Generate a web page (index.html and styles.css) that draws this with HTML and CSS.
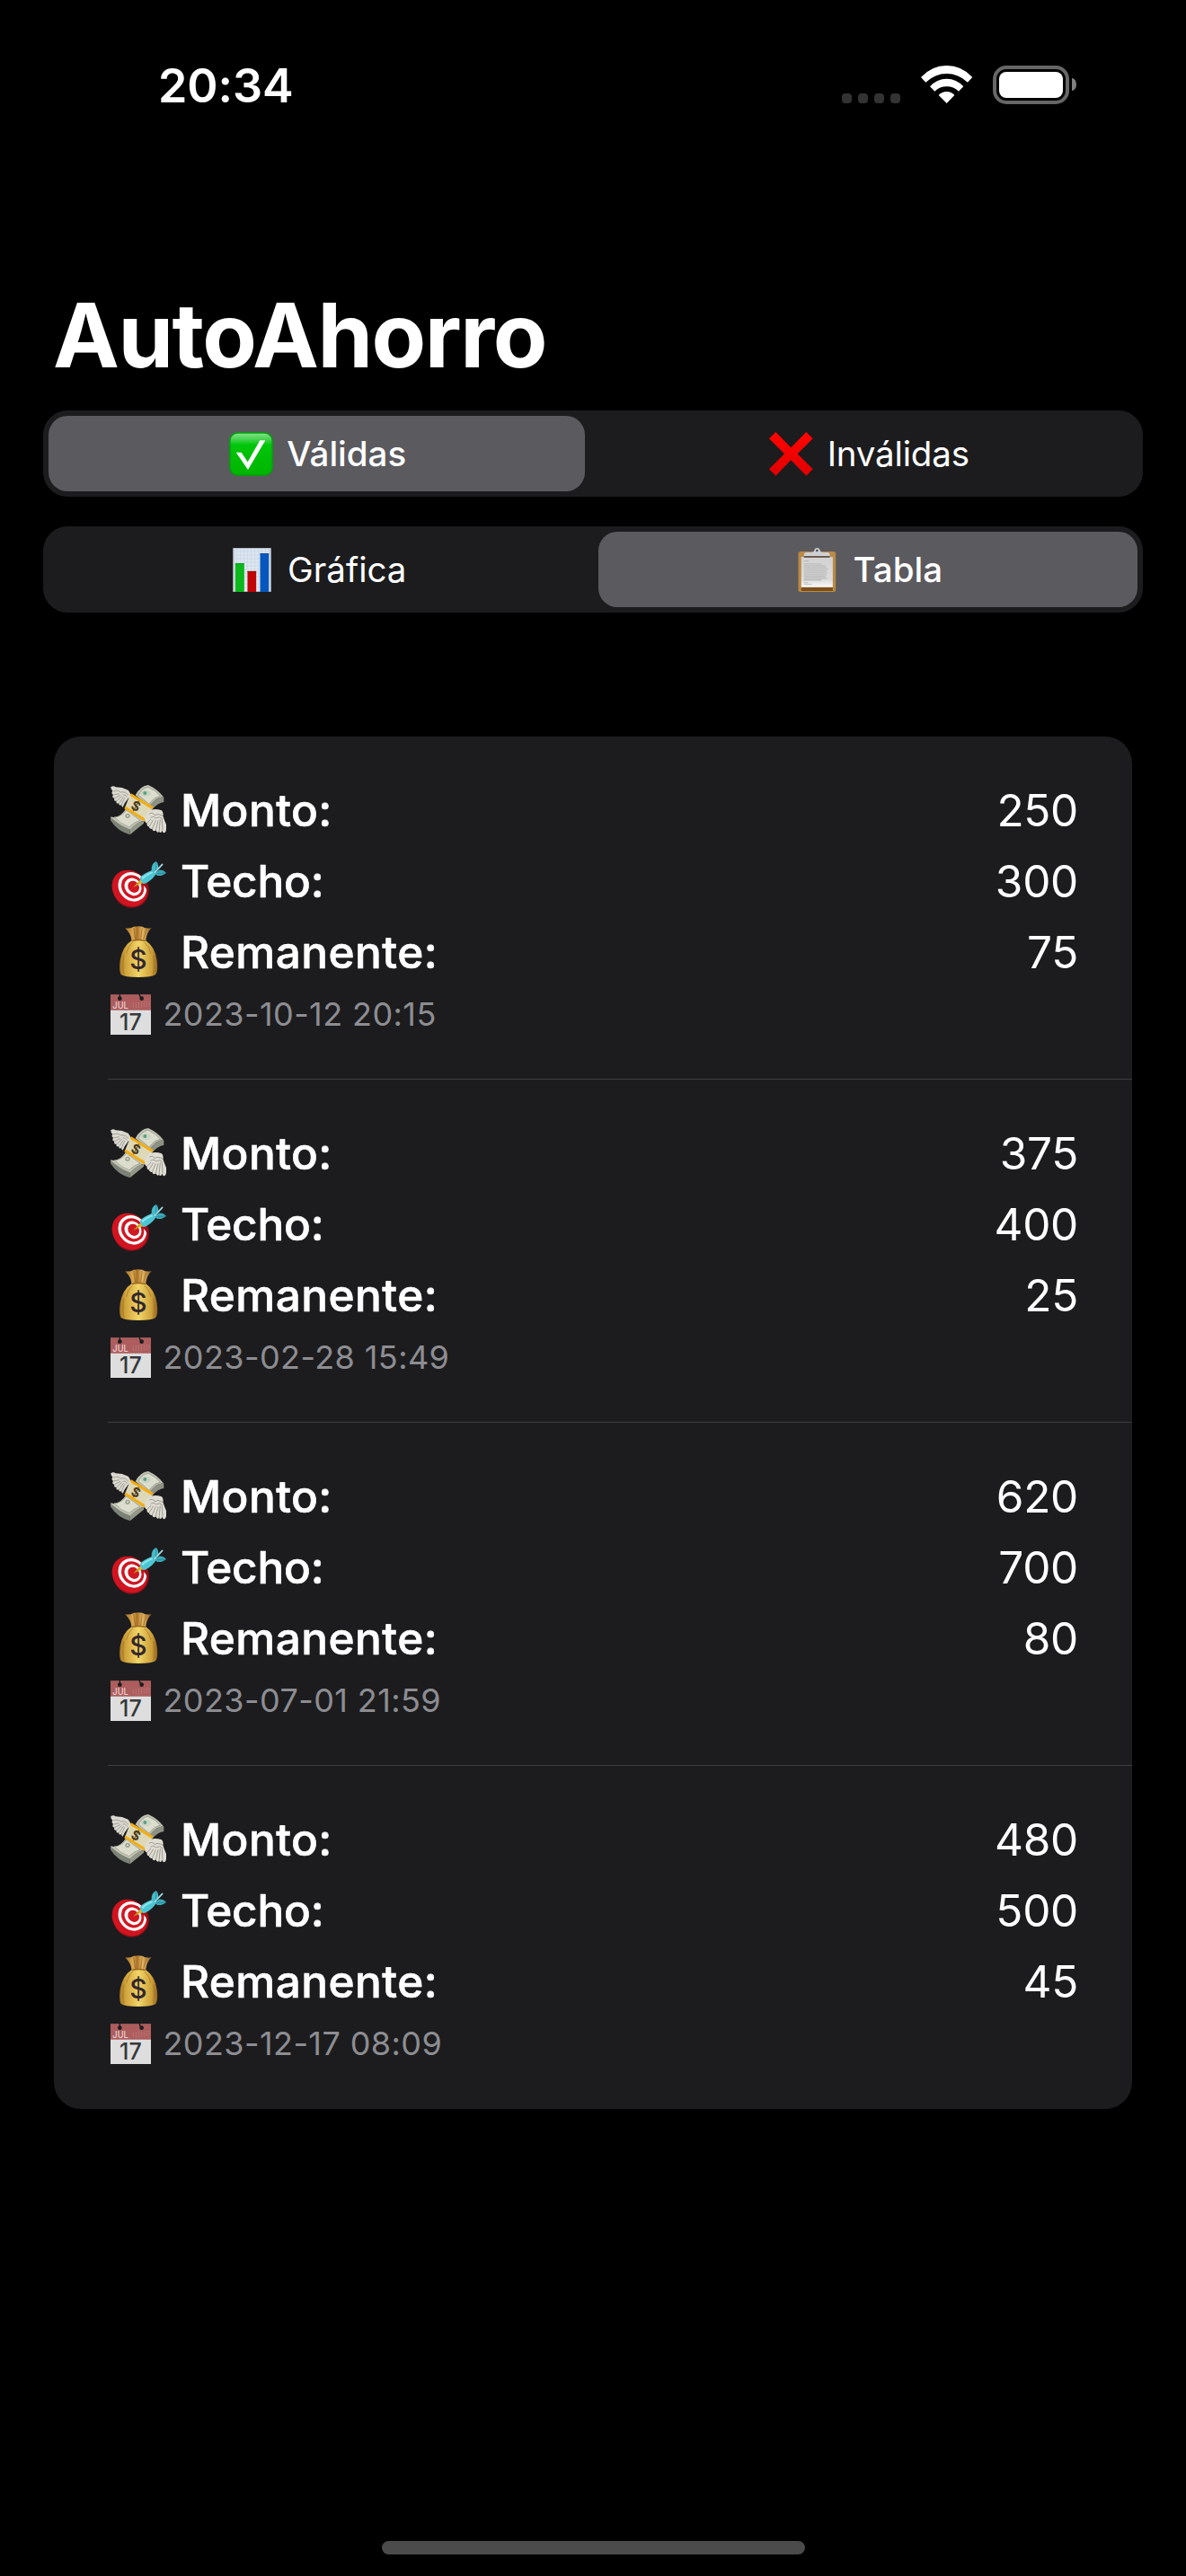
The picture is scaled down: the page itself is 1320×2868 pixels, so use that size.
FILE: index.html
```html
<!DOCTYPE html>
<html lang="es">
<head>
<meta charset="utf-8">
<title>AutoAhorro</title>
<link rel="stylesheet" href="styles.css">
</head>
<body>
<svg class="gradients" aria-hidden="true">
  <defs>
    <linearGradient id="green" x1="0" y1="0" x2="0" y2="1"><stop offset="0" stop-color="#7fe085"/><stop offset=".12" stop-color="#4fd457"/><stop offset=".28" stop-color="#00c60a"/><stop offset="1" stop-color="#00b400"/></linearGradient>
    <linearGradient id="red" x1="0" y1="0" x2="0" y2="1"><stop offset="0" stop-color="#ff0500"/><stop offset="1" stop-color="#e00000"/></linearGradient>
    <linearGradient id="paper" x1="0" y1="0" x2="0" y2="1"><stop offset="0" stop-color="#d2d2d2"/><stop offset=".75" stop-color="#dcdcdc"/><stop offset="1" stop-color="#fafafa"/></linearGradient>
    <linearGradient id="sack" x1="0" y1="0" x2="1" y2="0"><stop offset="0" stop-color="#a87a26"/><stop offset=".15" stop-color="#cfa23a"/><stop offset=".5" stop-color="#f2d568"/><stop offset=".85" stop-color="#cda03a"/><stop offset="1" stop-color="#916320"/></linearGradient>
    <linearGradient id="neck" x1="0" y1="0" x2="1" y2="0"><stop offset="0" stop-color="#a8752e"/><stop offset=".3" stop-color="#dba84e"/><stop offset=".45" stop-color="#a87028"/><stop offset=".65" stop-color="#e5b762"/><stop offset="1" stop-color="#8e5f25"/></linearGradient>
    <linearGradient id="grid" x1="0" y1="0" x2="0" y2="1"><stop offset="0" stop-color="#d9e4ef"/><stop offset="1" stop-color="#e8ecf0"/></linearGradient>
  </defs>
</svg>

<svg class="sprite" aria-hidden="true">
  <symbol id="money" viewBox="39 33 186 186">
    <path d="M40 148Q60 156 82 133L94 117L152 160Q125 168 106 192Q72 190 40 160Z" fill="#c3c5b4"/>
    <path d="M40 150Q70 178 104 190L104 208Q62 196 41 163Z" fill="#7d8277"/>
    <path d="M104 190Q122 168 150 161L150 170Q130 186 104 208Z" fill="#939888"/>
    <path d="M52 149Q70 151 93 126L138 160Q118 166 101 182Q74 174 52 149Z" fill="#dcddcd" stroke="#8c8f86" stroke-width="2"/>
    <path d="M122 76Q138 45 165 42Q196 56 217 83Q194 79 170 113Z" fill="#bfc2b2"/>
    <path d="M217 83V99Q198 101 180 122L168 112Q193 80 217 83Z" fill="#8d9184"/>
    <path d="M132 75Q146 51 165 49Q190 60 206 79Q184 82 168 106Z" fill="#dbddcd" stroke="#898d82" stroke-width="2"/>
    <ellipse cx="157" cy="70" rx="17" ry="11" fill="#ccd3c2"/><circle cx="154" cy="69" r="6" fill="#58a184"/>
    <circle cx="96" cy="145" r="8" fill="#9ca291"/><circle cx="96" cy="145" r="3" fill="#e2e4d4"/>
    <path d="M105 73L180 120L153 164L86 120Z" fill="#ddd8b7"/>
    <path d="M108 70L182 115L177 123L103 77Z" fill="#f3ad13"/>
    <path d="M90 113L156 155L151 163L85 121Z" fill="#f3ad13"/>
    <text x="124" y="128" class="glyph band" transform="rotate(28 124 113)">$</text>
    <path d="M40 49Q48 43 56 49Q78 49 98 59Q108 70 105 83Q96 85 93 94Q86 101 80 116Q74 113 76 108Q66 113 67 103Q56 106 59 95Q49 97 52 86Q42 84 48 74Q40 69 46 62Q39 56 40 49Z" fill="#dbd9cf"/>
    <path d="M48 63Q66 57 75 68M49 75L68 71M53 86L72 76M60 95L77 79M68 103L82 82M76 108L86 85M75 65Q90 63 99 76M80 75Q91 73 94 83" fill="none" stroke="#99978e" stroke-width="2.5"/>
    <path d="M157 143Q158 130 173 126Q188 119 210 127Q217 135 214 145Q218 158 225 174Q227 201 219 202Q214 202 211 194Q208 205 201 198Q195 204 190 193Q182 200 178 189Q169 191 167 181Q159 180 161 170Q151 166 155 157Q150 151 157 143Z" fill="#dfddd2"/>
    <path d="M161 170L174 156M168 181L182 158M178 189L190 160M190 193L198 160M201 198L205 157M213 194L211 157M168 139Q180 131 186 143Q197 135 214 145M173 151Q185 144 190 153Q204 145 213 155" fill="none" stroke="#929087" stroke-width="2.5"/>
  </symbol>

  <symbol id="target" viewBox="39 30 186 186">
    <ellipse cx="108" cy="152" rx="59" ry="61" transform="rotate(-35 108 152)" fill="#8d1018"/>
    <ellipse cx="103" cy="147" rx="56" ry="64" transform="rotate(-38 103 147)" fill="#d11420"/>
    <ellipse cx="112" cy="142" rx="45" ry="51" transform="rotate(-38 112 142)" fill="#fff"/>
    <ellipse cx="113" cy="142" rx="36" ry="41" transform="rotate(-38 113 142)" fill="#d11722"/>
    <ellipse cx="114" cy="142" rx="27" ry="31" transform="rotate(-38 114 142)" fill="#fff"/>
    <ellipse cx="116" cy="142" rx="18" ry="21" transform="rotate(-38 116 142)" fill="#d11722"/>
    <path d="M142 132L160 128Q166 140 161 156Q158 143 142 132Z" fill="#9c1119"/>
    <path d="M115 143L134 123L142 116L149 129L137 133Z" fill="#e4b91f"/>
    <path d="M115 143L136 126" stroke="#8d6810" stroke-width="2"/>
    <path d="M137 112Q144 100 177 87L191 99Q178 121 154 131Q141 134 137 112Z" fill="#4cc6d4"/>
    <path d="M142 111Q156 99 178 91L181 96Q158 104 147 118Z" fill="#8de3e8"/>
    <path d="M176 90Q173 66 191 57Q198 61 199 79L190 98Z" fill="#46bac8"/>
    <path d="M187 98L200 86Q215 84 225 96Q213 107 195 105Z" fill="#3ba9b8"/>
    <path d="M187 94L212 67" stroke="#a1dce2" stroke-width="5" stroke-linecap="round"/>
    <path d="M191 88L191 59M196 98L222 96" stroke="#217c8c" stroke-width="2"/>
  </symbol>

  <symbol id="bag" viewBox="39 267 186 186">
    <path d="M88 280Q103 283 117 275Q132 272 145 275Q160 284 176 279Q160 295 157 319L158 326H108L109 319Q108 301 88 280Z" fill="url(#neck)"/>
    <path d="M116 279L122 317M145 278L140 317M158 284L149 317" stroke="#8b5a20" stroke-width="3" opacity=".6"/>
    <path d="M109 322Q132 315 157 322Q187 342 194 387Q199 422 190 435Q178 444 132 444Q86 444 74 435Q67 423 71 387Q80 340 109 322Z" fill="url(#sack)"/>
    <path d="M110 323Q132 316 156 323" fill="none" stroke="#98671f" stroke-width="4"/>
    <path d="M84 370Q78 410 84 434M182 370Q188 410 181 434M113 328Q98 340 92 365M153 328Q169 342 174 365" fill="none" stroke="#9f7025" stroke-width="3" opacity=".65"/>
    <text x="132" y="418" class="glyph dollar">$</text>
  </symbol>

  <symbol id="calendar" viewBox="39 51 135 135">
    <path d="M39 51H174V186H39Z" fill="#dedede"/>
    <path d="M39 51H174V104H39Z" fill="#ad5d5d"/>
    <path d="M39 52H174" stroke="#8f5353" stroke-width="3"/>
    <path d="M70 51V63M136 51Q136 60 143 63" stroke="#1c1c1e" stroke-width="4" fill="none"/>
    <circle cx="70" cy="65" r="7" fill="#1c1c1e"/><circle cx="143" cy="65" r="7" fill="#1c1c1e"/>
    <path d="M115 80V97M124 79V97M133 78V97M142 77V97M151 76V95M160 75V93M168 75V91" stroke="#cf9292" stroke-width="2" stroke-dasharray="3 2"/>
    <text x="46" y="98" class="glyph month" textLength="52" lengthAdjust="spacingAndGlyphs">JUL</text>
    <text x="106" y="171" class="glyph day" textLength="74" lengthAdjust="spacingAndGlyphs">17</text>
  </symbol>

  <symbol id="check" viewBox="45 33 147 147">
    <rect x="45" y="33" width="147" height="147" rx="29" fill="#0a9a12"/>
    <rect x="50" y="38" width="137" height="137" rx="24" fill="url(#green)"/>
    <path d="M68 101H86L107 133L148 61H166L108 159Z" fill="#fff"/>
  </symbol>

  <symbol id="chart" viewBox="59 420 126 147">
    <path d="M59 420H185V567H59Z" fill="url(#grid)"/>
    <path d="M71 420V567M83 420V567M95 420V567M107 420V567M119 420V567M131 420V567M143 420V567M155 420V567M167 420V567M179 420V567M59 432H185M59 444H185M59 456H185M59 468H185M59 480H185M59 492H185M59 504H185M59 516H185M59 528H185M59 540H185M59 552H185" stroke="#c6d7e6" stroke-width="2"/>
    <path d="M60.500 421.500H183.500V565.500H60.500Z" fill="none" stroke="#b4bcc6" stroke-width="3"/>
    <path d="M66 472H96V567H66Z" fill="#0cb81c"/><path d="M107 498H136V567H107Z" fill="#bf0606"/><path d="M149 439H178V567H149Z" fill="#0657bd"/>
    <path d="M66 473H96" stroke="#08951a" stroke-width="3"/><path d="M107 499H136" stroke="#930909" stroke-width="3"/><path d="M149 440H178" stroke="#0a469b" stroke-width="3"/>
  </symbol>

  <symbol id="cross" viewBox="19 33 147 147">
    <path d="M41 33L92 85L143 33L165 55L114 106L165 157L143 179L92 127L41 179L19 157L70 106L19 55Z" fill="url(#red)"/>
  </symbol>

  <symbol id="clipboard" viewBox="119 419 127 148">
    <rect x="119" y="431" width="126" height="136" rx="8" fill="#b98a45"/>
    <path d="M129 551H235V564H129Z" fill="#7c4f1d"/>
    <path d="M129 449H235V551H129Z" fill="url(#paper)"/>
    <path d="M160 436Q173 432 173 427H192Q192 432 205 436Z" fill="#94b5d9"/>
    <path d="M138 450V442Q138 434 148 434H167Q173 430 173 428Q174 419 182 419Q191 419 192 428Q192 431 198 434H216Q225 434 225 442V450Z" fill="#cdd0d3"/>
    <path d="M138 449H225" stroke="#5b4637" stroke-width="5"/>
    <circle cx="182" cy="428" r="4" fill="#4a4d52"/>
    <path d="M138 463H154M138 536H152M138 541H164" stroke="#aaa" stroke-width="2"/>
    <path d="M138 473H197M138 479H211M138 485H215M138 491H220M138 497H214M138 503H216M138 509H214M138 515H211M138 521H215M138 527H197" fill="none" stroke="#bdbdbd" stroke-width="4"/>
  </symbol>
</svg>

<div class="screen">
  <header class="status">
    <span class="clock">20:34</span>
    <div class="indicators">
      <span class="signal"><i></i><i></i><i></i><i></i></span>
      <svg class="wifi" viewBox="315 69 172 126">
        <path d="M315 108Q351 69 401 69Q451 69 487 108L471 125Q440 96 401 96Q362 96 331 125Z"/>
        <path d="M345 139Q368 113 401 113Q434 113 457 139L441 155Q424 139 401 139Q378 139 361 155Z"/>
        <path d="M374 168Q385 156 401 156Q417 156 427 168L401 195Z"/>
      </svg>
      <span class="battery"><span class="charge"></span></span>
      <span class="terminal"></span>
    </div>
  </header>

  <h1 class="title">AutoAhorro</h1>

  <nav class="segments">
    <div class="segment selected left"><svg class="tab-icon"><use href="#check"/></svg><span>Válidas</span></div>
    <div class="segment invalid"><svg class="tab-icon"><use href="#cross"/></svg><span>Inválidas</span></div>
  </nav>
  <nav class="segments">
    <div class="segment"><svg class="tab-icon"><use href="#chart"/></svg><span>Gráfica</span></div>
    <div class="segment selected right"><svg class="tab-icon"><use href="#clipboard"/></svg><span>Tabla</span></div>
  </nav>

  <ul class="card">
    <li class="entry">
      <div class="line"><svg class="icon"><use href="#money"/></svg><span class="label">Monto:</span><span class="value">250</span></div>
      <div class="line"><svg class="icon"><use href="#target"/></svg><span class="label techo">Techo:</span><span class="value">300</span></div>
      <div class="line"><svg class="icon"><use href="#bag"/></svg><span class="label">Remanente:</span><span class="value">75</span></div>
      <div class="date"><svg class="cal"><use href="#calendar"/></svg><time>2023-10-12 20:15</time></div>
    </li>
    <li class="entry">
      <div class="line"><svg class="icon"><use href="#money"/></svg><span class="label">Monto:</span><span class="value">375</span></div>
      <div class="line"><svg class="icon"><use href="#target"/></svg><span class="label techo">Techo:</span><span class="value">400</span></div>
      <div class="line"><svg class="icon"><use href="#bag"/></svg><span class="label">Remanente:</span><span class="value">25</span></div>
      <div class="date"><svg class="cal"><use href="#calendar"/></svg><time>2023-02-28 15:49</time></div>
    </li>
    <li class="entry">
      <div class="line"><svg class="icon"><use href="#money"/></svg><span class="label">Monto:</span><span class="value">620</span></div>
      <div class="line"><svg class="icon"><use href="#target"/></svg><span class="label techo">Techo:</span><span class="value">700</span></div>
      <div class="line"><svg class="icon"><use href="#bag"/></svg><span class="label">Remanente:</span><span class="value">80</span></div>
      <div class="date"><svg class="cal"><use href="#calendar"/></svg><time>2023-07-01 21:59</time></div>
    </li>
    <li class="entry">
      <div class="line"><svg class="icon"><use href="#money"/></svg><span class="label">Monto:</span><span class="value">480</span></div>
      <div class="line"><svg class="icon"><use href="#target"/></svg><span class="label techo">Techo:</span><span class="value">500</span></div>
      <div class="line"><svg class="icon"><use href="#bag"/></svg><span class="label">Remanente:</span><span class="value">45</span></div>
      <div class="date"><svg class="cal"><use href="#calendar"/></svg><time>2023-12-17 08:09</time></div>
    </li>
  </ul>

  <div class="home-indicator"></div>
</div>
</body>
</html>
```

FILE: styles.css
```css
* { box-sizing: border-box; }

body {
  margin: 0;
  background: #000;
  color: #fff;
  font-family: Inter, "Liberation Sans", sans-serif;
}

/* Gradients must stay rendered to be usable; the symbols need not */
.gradients { position: absolute; width: 0; height: 0; }
.sprite { display: none; }

.screen {
  display: flex;
  flex-direction: column;
  width: 1320px;
  height: 2868px;
  padding-bottom: 24px;
}

/* Status bar */
.status {
  display: flex;
  justify-content: space-between;
  height: 313px;
  padding: 61px 122px 0 176px;
}
.clock {
  height: 70px;
  font-size: 52px;
  font-weight: 600;
  letter-spacing: -.1px;
  line-height: 70px;
}
.indicators { display: flex; align-items: flex-start; padding-top: 12px; }
.signal { display: flex; gap: 7px; margin: 31px 23px 0 0; }
.signal i { width: 11px; height: 11px; border-radius: 4px; background: #333; }
.wifi { width: 57.333px; height: 42px; margin-right: 23px; fill: #fff; }
.battery {
  width: 85px;
  height: 43px;
  padding: 3px;
  border: 4px solid #666;
  border-radius: 15px;
}
.charge { display: block; height: 29px; border-radius: 8px; background: #fff; }
.terminal {
  width: 5px;
  height: 14px;
  margin: 14px 0 0 3px;
  border-radius: 0 5px 5px 0 / 0 7px 7px 0;
  background: #808080;
}

.title {
  height: 120px;
  margin: 0 0 24px 59px;
  font-size: 99px;
  font-weight: 700;
  letter-spacing: -1.53px;
  line-height: 120px;
}

/* Segmented controls */
.segments {
  display: grid;
  grid-template-columns: 1fr 1fr;
  height: 96px;
  margin: 0 48px 33px;
  border-radius: 27px;
  background: #1c1c1e;
}
.segment {
  display: flex;
  align-items: center;
  justify-content: center;
  gap: 15.500px;
  font-size: 38.500px;
  font-weight: 400;
}
.selected {
  margin: 6px;
  border-radius: 21px;
  background: #5b5a5f;
  font-weight: 500;
}
.left { margin-right: 9px; padding-left: 2px; }
.right { padding-left: 2px; }
.invalid { padding-left: 3px; letter-spacing: -.17px; }
.tab-icon { width: 49px; height: 49px; }

/* Entry list */
.card {
  width: 1200px;
  height: 1528px;
  margin: 105px 60px 0;
  padding: 0 0 0 60px;
  border-radius: 30px;
  background: #1c1c1e;
  list-style: none;
}
.entry {
  height: 382px;
  padding: 42px 60px 0 3px;
  border-bottom: 1px solid #3d3d41;
}
.entry:last-child { border-bottom: 0; }
.line {
  display: flex;
  align-items: center;
  height: 79px;
  font-size: 49.500px;
}
.icon { width: 62px; height: 62px; margin-right: 16px; }
.label {
  font-weight: 500;
  letter-spacing: .45px;
  -webkit-text-stroke: .6px #fff;
}
.techo { letter-spacing: -.2px; }
.value { margin-left: auto; letter-spacing: -.3px; }
.date {
  display: flex;
  align-items: center;
  gap: 13.500px;
  height: 60px;
  color: #8d8d92;
  font-size: 36px;
  letter-spacing: .41px;
}
.cal { width: 45px; height: 45px; }

/* Lettering inside the icons */
.glyph { font-family: Inter, "Liberation Sans", sans-serif; letter-spacing: 0; text-anchor: middle; }
.band { fill: #4c3a15; font-size: 43px; font-weight: 700; }
.dollar { fill: #33272b; font-size: 90px; font-weight: 500; }
.month { fill: #ead3d3; font-size: 29px; font-weight: 500; text-anchor: start; }
.day { fill: #36383b; font-size: 76px; font-weight: 500; }

.home-indicator {
  width: 471px;
  height: 15px;
  margin: auto auto 0;
  border-radius: 7.500px;
  background: #4b4b4b;
}
```
